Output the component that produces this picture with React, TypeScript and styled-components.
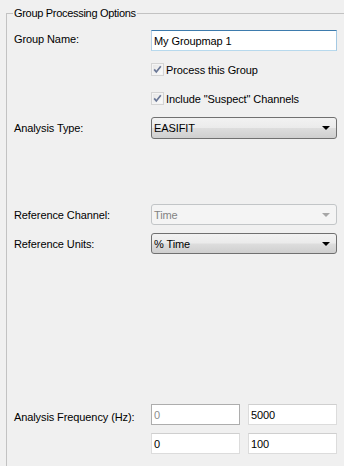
import React from "react";
import styled, { createGlobalStyle, css } from "styled-components";

const Global = createGlobalStyle`
  html, body {
    margin: 0;
    padding: 0;
    background: #f0f0f0;
  }
  body {
    width: 344px;
    height: 466px;
    overflow: hidden;
    font-family: "Liberation Sans", Arial, sans-serif;
    font-size: 11px;
    letter-spacing: -0.1px;
    color: #000;
  }
`;

const GroupBox = styled.fieldset`
  margin: 6px 0 0 6px;
  padding: 0 0 0 7px;
  border: 1px solid #c2c2c2;
  border-right: none;
  border-bottom: none;
  min-width: 0;
  height: 460px;
  box-sizing: border-box;
`;

const Legend = styled.legend`
  padding: 0 1px;
  margin-left: -1px;
  line-height: 15px;
  font-size: 11px;
  letter-spacing: -0.3px;
  color: #000;
`;

const Form = styled.div`
  display: flex;
  flex-direction: column;
  gap: 8px;
  padding-top: 9px;
  width: 323px;
`;

const Row = styled.div<{ $space?: number }>`
  display: grid;
  grid-template-columns: 137px 186px;
  align-items: center;
  margin-top: ${(p) => p.$space ?? 0}px;
`;

const Label = styled.span<{ $shift?: number }>`
  line-height: 14px;
  white-space: nowrap;
  ${(p) =>
    p.$shift
      ? css`
          align-self: start;
          margin-top: ${p.$shift}px;
        `
      : ""}
`;

const TextBox = styled.div<{ $focused?: boolean; $disabled?: boolean }>`
  height: 21px;
  box-sizing: border-box;
  background: #fff;
  border: 1px solid #dcdcdc;
  border-top-color: #cfcfcf;
  padding: 0 3px 0 2px;
  display: flex;
  align-items: center;
  line-height: 14px;
  ${(p) =>
    p.$focused &&
    css`
      border-color: #3d7bad #a4c9e3 #b7d9ed #b5cfe7;
    `}
  ${(p) =>
    p.$disabled &&
    css`
      border-color: #adadad;
      color: #8d8d8d;
    `}
`;

const Combo = styled.div<{ $disabled?: boolean; $tall?: boolean }>`
  height: ${(p) => (p.$tall ? 22 : 21)}px;
  box-sizing: border-box;
  border: 1px solid #707070;
  border-radius: 3px;
  background: linear-gradient(
    to bottom,
    #f2f2f2 0%,
    #ebebeb 48%,
    #dddddd 52%,
    #cfcfcf 100%
  );
  display: flex;
  align-items: center;
  justify-content: space-between;
  padding: 0 6px 0 2px;
  line-height: 14px;
  color: #000;
  ${(p) =>
    p.$disabled &&
    css`
      border-color: #c2c5c7;
      background: #f4f4f4;
      color: #838383;
    `}
`;

const Arrow = styled.span<{ $disabled?: boolean }>`
  width: 0;
  height: 0;
  border-left: 4px solid transparent;
  border-right: 4px solid transparent;
  border-top: 4px solid ${(p) => (p.$disabled ? "#a6a6a6" : "#000")};
`;

const CheckRow = styled.label`
  grid-column: 2;
  display: flex;
  align-items: center;
  gap: 2px;
  height: 21px;
  line-height: 14px;
`;

const Pair = styled.div`
  display: grid;
  grid-template-columns: 89px 89px;
  column-gap: 8px;
`;

const PairRows = styled.div`
  display: flex;
  flex-direction: column;
  gap: 8px;
`;

const CheckIcon = () => (
  <svg width="13" height="13" viewBox="0 0 13 13" style={{ flex: "none" }}>
    <defs>
      <linearGradient id="cbg" x1="0" y1="0" x2="1" y2="1">
        <stop offset="0" stopColor="#e6e6e6" />
        <stop offset="1" stopColor="#fbfbfb" />
      </linearGradient>
    </defs>
    <rect x="0.5" y="0.5" width="12" height="12" fill="#f4f4f4" stroke="#d4d4d4" />
    <rect x="2" y="2" width="9" height="9" fill="url(#cbg)" />
    <path
      d="M3.2 6.4 L5.3 9 L9.8 3.2"
      fill="none"
      stroke="#6a7796"
      strokeWidth="1.7"
    />
  </svg>
);

export default function App() {
  return (
    <>
      <Global />
      <GroupBox>
        <Legend>Group Processing Options</Legend>
        <Form>
          <Row>
            <Label $shift={2}>Group Name:</Label>
            <TextBox $focused>My Groupmap 1</TextBox>
          </Row>
          <Row>
            <CheckRow>
              <CheckIcon />
              <span>Process this Group</span>
            </CheckRow>
          </Row>
          <Row>
            <CheckRow>
              <CheckIcon />
              <span>Include "Suspect" Channels</span>
            </CheckRow>
          </Row>
          <Row>
            <Label>Analysis Type:</Label>
            <Combo $tall>
              <span>EASIFIT</span>
              <Arrow />
            </Combo>
          </Row>
          <Row $space={57}>
            <Label>Reference Channel:</Label>
            <Combo $disabled>
              <span>Time</span>
              <Arrow $disabled />
            </Combo>
          </Row>
          <Row>
            <Label>Reference Units:</Label>
            <Combo>
              <span>% Time</span>
              <Arrow />
            </Combo>
          </Row>
          <Row $space={142}>
            <Label $shift={6}>Analysis Frequency (Hz):</Label>
            <PairRows>
              <Pair>
                <TextBox $disabled>0</TextBox>
                <TextBox>5000</TextBox>
              </Pair>
              <Pair>
                <TextBox>0</TextBox>
                <TextBox>100</TextBox>
              </Pair>
            </PairRows>
          </Row>
        </Form>
      </GroupBox>
    </>
  );
}
